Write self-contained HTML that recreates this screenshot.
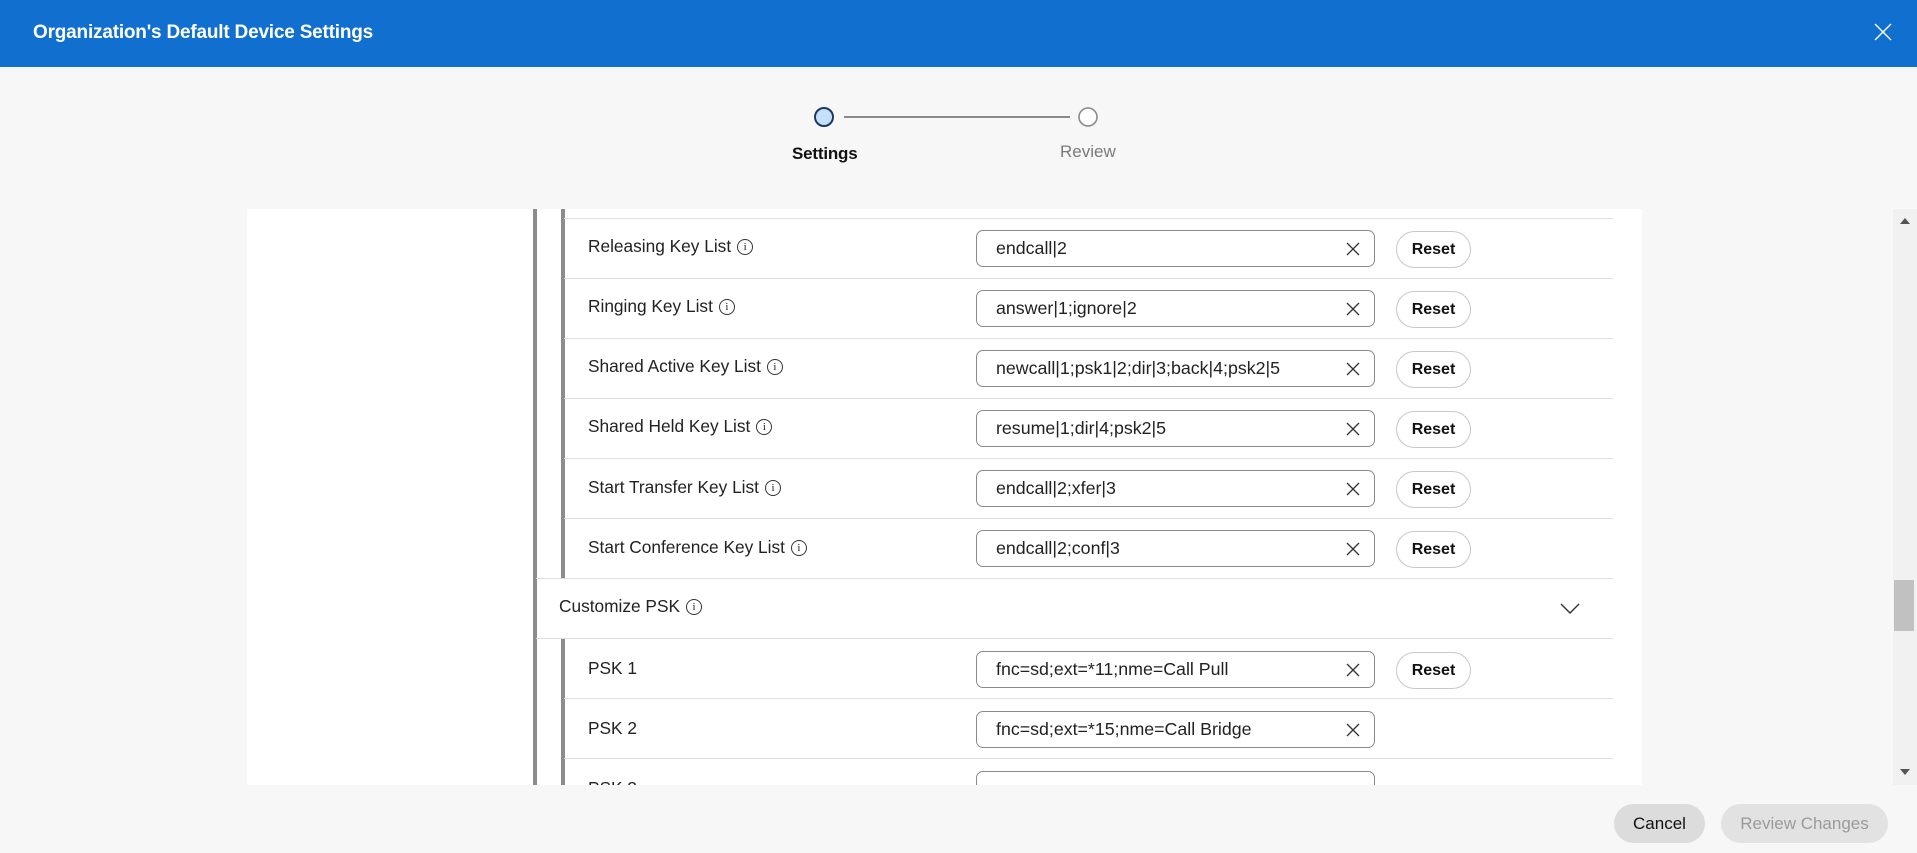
<!DOCTYPE html>
<html><head><meta charset="utf-8">
<style>
*{box-sizing:border-box;margin:0;padding:0}
body{width:1917px;height:853px;overflow:hidden;background:#f7f7f7;font-family:"Liberation Sans",sans-serif;color:#1d1d1d;position:relative}
.hdr{position:absolute;left:0;top:0;width:1917px;height:67px;background:#1170cf;color:#fff}
.hdr .t{position:absolute;left:33px;top:22px;font-size:19px;font-weight:bold;letter-spacing:-0.2px}
.abs{position:absolute}
.panel{position:absolute;left:247px;top:209px;width:1395px;height:576px;background:#fff;overflow:hidden}
.line{position:absolute;height:1px;background:#dedede}
.lbl{position:absolute;font-size:17.3px;color:#222;display:flex;align-items:center;gap:6px}
.info{width:16px;height:16px;border:1.2px solid #333;border-radius:50%;display:inline-flex;align-items:center;justify-content:center;font-size:11px;font-family:"Liberation Serif",serif}
.inp{position:absolute;width:399px;height:37px;border:1px solid #8a8a8a;border-radius:7px;font-size:17.8px;padding:7px 0 0 19px;color:#222}
.inp svg{position:absolute;right:14px;top:11px}
.reset{position:absolute;width:75px;height:37px;border:1px solid #c8c8c8;border-radius:19px;font-size:16px;font-weight:bold;text-align:center;line-height:35px;color:#111}
.bar{position:absolute;width:4px;background:#8c8c8c}
</style></head><body>
<div class="hdr"><div class="t">Organization's Default Device Settings</div>
<svg class="abs" style="left:1874px;top:23px" width="18" height="18" viewBox="0 0 18 18"><path d="M1 1L17 17M17 1L1 17" stroke="#fff" stroke-width="1.4"/></svg></div>

<svg class="abs" style="left:800px;top:100px" width="300" height="40">
<line x1="44" y1="17" x2="270" y2="17" stroke="#8a8a8a" stroke-width="2"/>
<circle cx="24" cy="17" r="9" fill="#c5e0fa" stroke="#1d3a5c" stroke-width="2"/>
<circle cx="288" cy="17" r="9" fill="#fff" stroke="#8a8a8a" stroke-width="1.6"/>
</svg>
<div class="abs" style="left:792px;top:144px;font-size:17px;color:#111;font-weight:bold;letter-spacing:-0.2px">Settings</div>
<div class="abs" style="left:1060px;top:142px;font-size:17px;color:#7a7a7a">Review</div>

<div class="panel">
<div class="bar" style="left:286px;top:0;height:576px"></div>
<div class="bar" style="left:314px;top:0;height:369px"></div>
<div class="bar" style="left:314px;top:429px;height:147px"></div>
<div class="line" style="left:317px;width:1049px;top:9px"></div>
<div class="line" style="left:317px;width:1049px;top:69px"></div>
<div class="line" style="left:317px;width:1049px;top:129px"></div>
<div class="line" style="left:317px;width:1049px;top:189px"></div>
<div class="line" style="left:317px;width:1049px;top:249px"></div>
<div class="line" style="left:317px;width:1049px;top:309px"></div>
<div class="line" style="left:289px;width:1077px;top:369px"></div>
<div class="line" style="left:289px;width:1077px;top:429px"></div>
<div class="line" style="left:317px;width:1049px;top:489px"></div>
<div class="line" style="left:317px;width:1049px;top:549px"></div>

<div class="lbl" style="left:341px;top:27px">Releasing Key List <span class="info">i</span></div>
<div class="lbl" style="left:341px;top:87px">Ringing Key List <span class="info">i</span></div>
<div class="lbl" style="left:341px;top:147px">Shared Active Key List <span class="info">i</span></div>
<div class="lbl" style="left:341px;top:207px">Shared Held Key List <span class="info">i</span></div>
<div class="lbl" style="left:341px;top:268px">Start Transfer Key List <span class="info">i</span></div>
<div class="lbl" style="left:341px;top:328px">Start Conference Key List <span class="info">i</span></div>
<div class="lbl" style="left:312px;top:387px">Customize PSK <span class="info">i</span></div>
<svg class="abs" style="left:1313px;top:394px" width="20" height="12"><path d="M1 1L10 10L19 1" fill="none" stroke="#333" stroke-width="1.4"/></svg>
<div class="lbl" style="left:341px;top:449px">PSK 1</div>
<div class="lbl" style="left:341px;top:509px">PSK 2</div>
<div class="lbl" style="left:341px;top:569px">PSK 3</div>

<div class="inp" style="left:729px;top:21px">endcall|2<svg width="14" height="14"><path d="M1 1L13 13M13 1L1 13" stroke="#333" stroke-width="1.3"/></svg></div>
<div class="inp" style="left:729px;top:81px">answer|1;ignore|2<svg width="14" height="14"><path d="M1 1L13 13M13 1L1 13" stroke="#333" stroke-width="1.3"/></svg></div>
<div class="inp" style="left:729px;top:141px">newcall|1;psk1|2;dir|3;back|4;psk2|5<svg width="14" height="14"><path d="M1 1L13 13M13 1L1 13" stroke="#333" stroke-width="1.3"/></svg></div>
<div class="inp" style="left:729px;top:201px">resume|1;dir|4;psk2|5<svg width="14" height="14"><path d="M1 1L13 13M13 1L1 13" stroke="#333" stroke-width="1.3"/></svg></div>
<div class="inp" style="left:729px;top:261px">endcall|2;xfer|3<svg width="14" height="14"><path d="M1 1L13 13M13 1L1 13" stroke="#333" stroke-width="1.3"/></svg></div>
<div class="inp" style="left:729px;top:321px">endcall|2;conf|3<svg width="14" height="14"><path d="M1 1L13 13M13 1L1 13" stroke="#333" stroke-width="1.3"/></svg></div>
<div class="inp" style="left:729px;top:442px">fnc=sd;ext=*11;nme=Call Pull<svg width="14" height="14"><path d="M1 1L13 13M13 1L1 13" stroke="#333" stroke-width="1.3"/></svg></div>
<div class="inp" style="left:729px;top:502px">fnc=sd;ext=*15;nme=Call Bridge<svg width="14" height="14"><path d="M1 1L13 13M13 1L1 13" stroke="#333" stroke-width="1.3"/></svg></div>
<div class="inp" style="left:729px;top:562px"></div>

<div class="reset" style="left:1149px;top:22px">Reset</div>
<div class="reset" style="left:1149px;top:82px">Reset</div>
<div class="reset" style="left:1149px;top:142px">Reset</div>
<div class="reset" style="left:1149px;top:202px">Reset</div>
<div class="reset" style="left:1149px;top:262px">Reset</div>
<div class="reset" style="left:1149px;top:322px">Reset</div>
<div class="reset" style="left:1149px;top:443px">Reset</div>
</div>

<div class="abs" style="left:1893px;top:209px;width:24px;height:576px;background:#f1f1f1"></div>
<div class="abs" style="left:1894px;top:580px;width:20px;height:51px;background:#c1c1c1"></div>
<svg class="abs" style="left:1899px;top:217px" width="12" height="8"><path d="M1 7L6 1L11 7Z" fill="#555"/></svg>
<svg class="abs" style="left:1899px;top:768px" width="12" height="8"><path d="M1 1L6 7L11 1Z" fill="#555"/></svg>

<div class="abs" style="left:1614px;top:804px;width:91px;height:39px;border-radius:20px;background:#dcdcdc;font-size:17px;text-align:center;line-height:39px;color:#111">Cancel</div>
<div class="abs" style="left:1721px;top:804px;width:167px;height:39px;border-radius:20px;background:#e2e2e2;font-size:17px;text-align:center;line-height:39px;color:#9a9a9a">Review Changes</div>
</body></html>
